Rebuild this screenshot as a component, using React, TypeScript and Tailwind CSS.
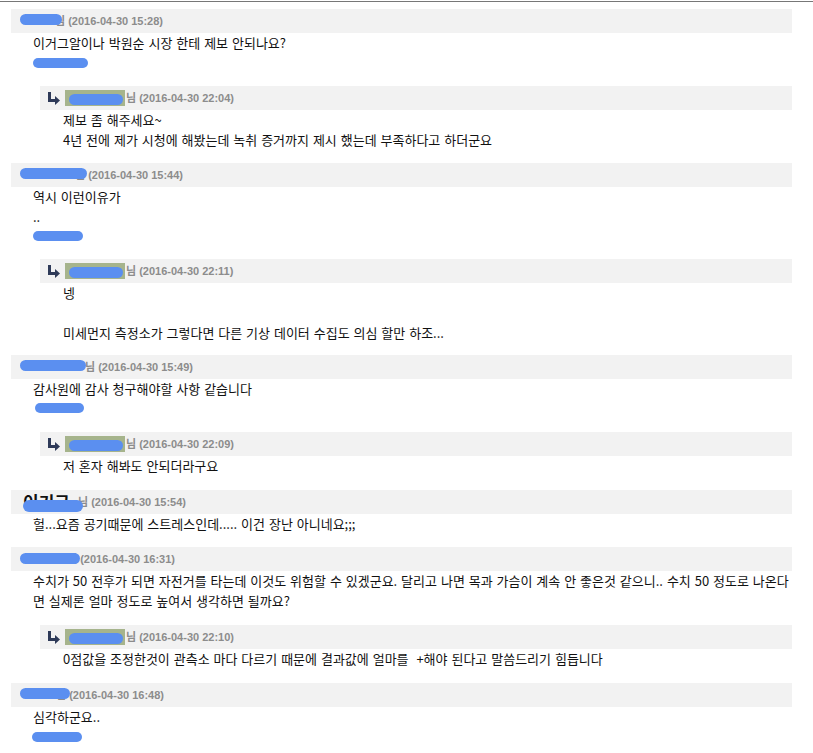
import React from "react";

type HeadProps = {
  areaCls: string;
  blobCls: string;
  date: string;
  name?: React.ReactNode;
};

function Blob({ cls }: { cls: string }) {
  return <span className={"absolute rounded-full bg-[#5b8ff0] blur-[0.6px] " + cls} />;
}

function TopHeader({ areaCls, blobCls, date, name }: HeadProps) {
  return (
    <div className="relative flex h-6 items-center bg-[#f2f2f2] pl-[9px] font-['Liberation_Sans','Noto_Sans_CJK_KR',sans-serif] text-[11px] font-bold text-[#8c8c8c]">
      <span className={"flex h-full flex-none items-center " + areaCls}>{name}</span>
      <span className="whitespace-nowrap">님 ({date})</span>
      <Blob cls={blobCls} />
    </div>
  );
}

function Arrow() {
  return (
    <svg width="12" height="13" viewBox="0 0 12 13" className="flex-none">
      <rect x="0" y="0" width="3" height="10" fill="#2e3a58" />
      <rect x="0" y="7" width="8" height="3" fill="#2e3a58" />
      <polygon points="7,4 12,8.5 7,13" fill="#2e3a58" />
    </svg>
  );
}

function ReplyHeader({ date }: { date: string }) {
  return (
    <div className="flex h-6 items-center bg-[#f2f2f2] pl-2 font-['Liberation_Sans','Noto_Sans_CJK_KR',sans-serif] text-[11px] font-bold text-[#8c8c8c]">
      <Arrow />
      <span className="relative ml-[5px] h-4 w-[60px] flex-none bg-[#a6b48c]">
        <span className="absolute left-[4px] top-[4px] h-[11px] w-[54px] rounded-full bg-[#5b8ff0] blur-[0.6px]" />
      </span>
      <span className="ml-px whitespace-nowrap">님 ({date})</span>
    </div>
  );
}

function Line({ children }: { children?: React.ReactNode }) {
  return <div className="h-5 whitespace-nowrap leading-5">{children}</div>;
}

function Sig({ blobCls }: { blobCls: string }) {
  return (
    <div className="relative h-5">
      <Blob cls={blobCls} />
    </div>
  );
}

function Body({ children }: { children: React.ReactNode }) {
  return (
    <div className="pl-[22px] font-['Noto_Sans_CJK_KR',sans-serif] text-[13px] text-[#111] [word-spacing:1px]">
      {children}
    </div>
  );
}

function Reply({ date, cls, children }: { date: string; cls: string; children: React.ReactNode }) {
  return (
    <div className={"ml-[29px] " + cls}>
      <ReplyHeader date={date} />
      <div className="pl-[23px] font-['Noto_Sans_CJK_KR',sans-serif] text-[13px] text-[#111] [word-spacing:1px]">
        {children}
      </div>
    </div>
  );
}

export default function App() {
  return (
    <div className="min-h-screen bg-white">
      <div className="mt-px h-px bg-[#777777]" />
      <div className="pl-[11px] pr-[21px] pt-[7px]">
        {/* Comment 1 */}
        <div>
          <TopHeader areaCls="w-[35px]" blobCls="left-[9px] top-[5px] h-[11px] w-[42px]" date="2016-04-30 15:28" />
          <Body>
            <Line>이거그알이나 박원순 시장 한테 제보 안되나요?</Line>
            <Sig blobCls="left-0 top-[5px] h-[10px] w-[55px]" />
          </Body>
          <Reply date="2016-04-30 22:04" cls="mt-[13px]">
            <Line>제보 좀 해주세요~</Line>
            <Line>4년 전에 제가 시청에 해봤는데 녹취 증거까지 제시 했는데 부족하다고 하더군요</Line>
          </Reply>
        </div>

        {/* Comment 2 */}
        <div className="mt-[13px]">
          <TopHeader areaCls="w-[55px]" blobCls="left-[9px] top-[5px] h-[11px] w-[67px]" date="2016-04-30 15:44" />
          <Body>
            <Line>역시 이런이유가</Line>
            <Line>..</Line>
            <Sig blobCls="left-0 top-[4px] h-[10px] w-[50px]" />
          </Body>
          <Reply date="2016-04-30 22:11" cls="mt-3">
            <Line>넹</Line>
            <Line />
            <Line>미세먼지 측정소가 그렇다면 다른 기상 데이터 수집도 의심 할만 하조...</Line>
          </Reply>
        </div>

        {/* Comment 3 */}
        <div className="mt-3">
          <TopHeader areaCls="w-[65px]" blobCls="left-[9px] top-[5px] h-[11px] w-[66px]" date="2016-04-30 15:49" />
          <Body>
            <Line>감사원에 감사 청구해야할 사항 같습니다</Line>
            <Sig blobCls="left-[2px] top-[4px] h-[10px] w-[49px]" />
          </Body>
          <Reply date="2016-04-30 22:09" cls="mt-[13px]">
            <Line>저 혼자 해봐도 안되더라구요</Line>
          </Reply>
        </div>

        {/* Comment 4 */}
        <div className="mt-[14px]">
          <TopHeader
            areaCls="w-[58px]"
            blobCls="left-[12px] top-[10px] h-[12px] w-[60px]"
            date="2016-04-30 15:54"
            name={<span className="pl-[3px] font-['Noto_Sans_CJK_KR',sans-serif] text-[17px] font-bold leading-5 text-[#111]">이기구</span>}
          />
          <Body>
            <Line>헐...요즘 공기때문에 스트레스인데..... 이건 장난 아니네요;;;</Line>
          </Body>
        </div>

        {/* Comment 5 */}
        <div className="mt-[13px]">
          <TopHeader areaCls="w-[47px]" blobCls="left-[9px] top-[6px] h-[11px] w-[60px]" date="2016-04-30 16:31" />
          <Body>
            <Line>수치가 50 전후가 되면 자전거를 타는데 이것도 위험할 수 있겠군요. 달리고 나면 목과 가슴이 계속 안 좋은것 같으니.. 수치 50 정도로 나온다</Line>
            <Line>면 실제론 얼마 정도로 높여서 생각하면 될까요?</Line>
          </Body>
          <Reply date="2016-04-30 22:10" cls="mt-[14px]">
            <Line>0점값을 조정한것이 관측소 마다 다르기 때문에 결과값에 얼마를&nbsp; +해야 된다고 말씀드리기 힘듭니다</Line>
          </Reply>
        </div>

        {/* Comment 6 */}
        <div className="mt-[14px]">
          <TopHeader areaCls="w-[36px]" blobCls="left-[9px] top-[5px] h-[11px] w-[50px]" date="2016-04-30 16:48" />
          <Body>
            <Line>심각하군요..</Line>
            <Sig blobCls="left-[-1px] top-[5px] h-[10px] w-[50px]" />
          </Body>
        </div>
      </div>
    </div>
  );
}
